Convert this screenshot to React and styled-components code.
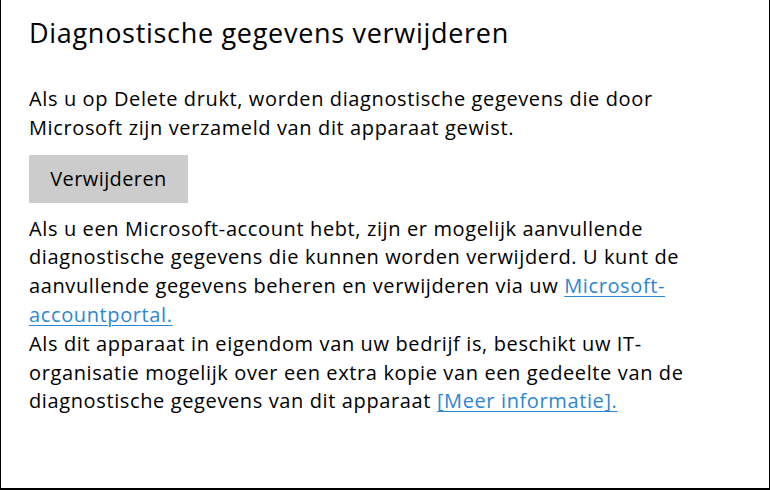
import React from 'react'
import styled, { createGlobalStyle } from 'styled-components'

const Global = createGlobalStyle`
  html, body {
    margin: 0;
    padding: 0;
    background: #fff;
  }
`

function App() {
  return (
    <>
      <Global />
      <Panel>
        <Title>Diagnostische gegevens verwijderen</Title>
        <Text>
          Als u op Delete drukt, worden diagnostische gegevens die door
          <br />
          Microsoft zijn verzameld van dit apparaat gewist.
        </Text>
        <DeleteButton>Verwijderen</DeleteButton>
        <Text $gap={12}>
          Als u een Microsoft-account hebt, zijn er mogelijk aanvullende
          <br />
          diagnostische gegevens die kunnen worden verwijderd. U kunt de
          <br />
          aanvullende gegevens beheren en verwijderen via uw{' '}
          <Link href="#">
            Microsoft-
            <br />
            accountportal.
          </Link>
          <br />
          Als dit apparaat in eigendom van uw bedrijf is, beschikt uw IT-
          <br />
          organisatie mogelijk over een extra kopie van een gedeelte van de
          <br />
          diagnostische gegevens van dit apparaat{' '}
          <Link href="#">[Meer informatie].</Link>
        </Text>
      </Panel>
    </>
  )
}
export default App

//styles
const Panel = styled.div`
  box-sizing: border-box;
  width: 770px;
  height: 490px;
  border: 1px solid #000;
  border-top: none;
  border-bottom-width: 2px;
  padding: 15px 20px 0 28px;
  font-family: "Open Sans", "Noto Sans", sans-serif;
  color: #000;
  display: flex;
  flex-direction: column;
  align-items: flex-start;
`
const Title = styled.h1`
  margin: 0 0 34px;
  font-size: 27px;
  font-weight: 400;
  line-height: 36px;
  letter-spacing: 0.7px;
  white-space: nowrap;
`
const Text = styled.p`
  margin: ${p => p.$gap || 0}px 0 0;
  font-size: 20px;
  line-height: 28.8px;
  letter-spacing: 0.62px;
  white-space: nowrap;
`
const DeleteButton = styled.button`
  margin-top: 12px;
  width: 159px;
  height: 48px;
  border: none;
  background: #cccccc;
  color: #000;
  font-family: inherit;
  font-size: 20px;
  letter-spacing: 0.4px;
  padding: 0;
`
const Link = styled.a`
  color: #2b87d3;
  text-decoration: underline;
  text-decoration-thickness: 1px;
  text-underline-offset: 3px;
`
